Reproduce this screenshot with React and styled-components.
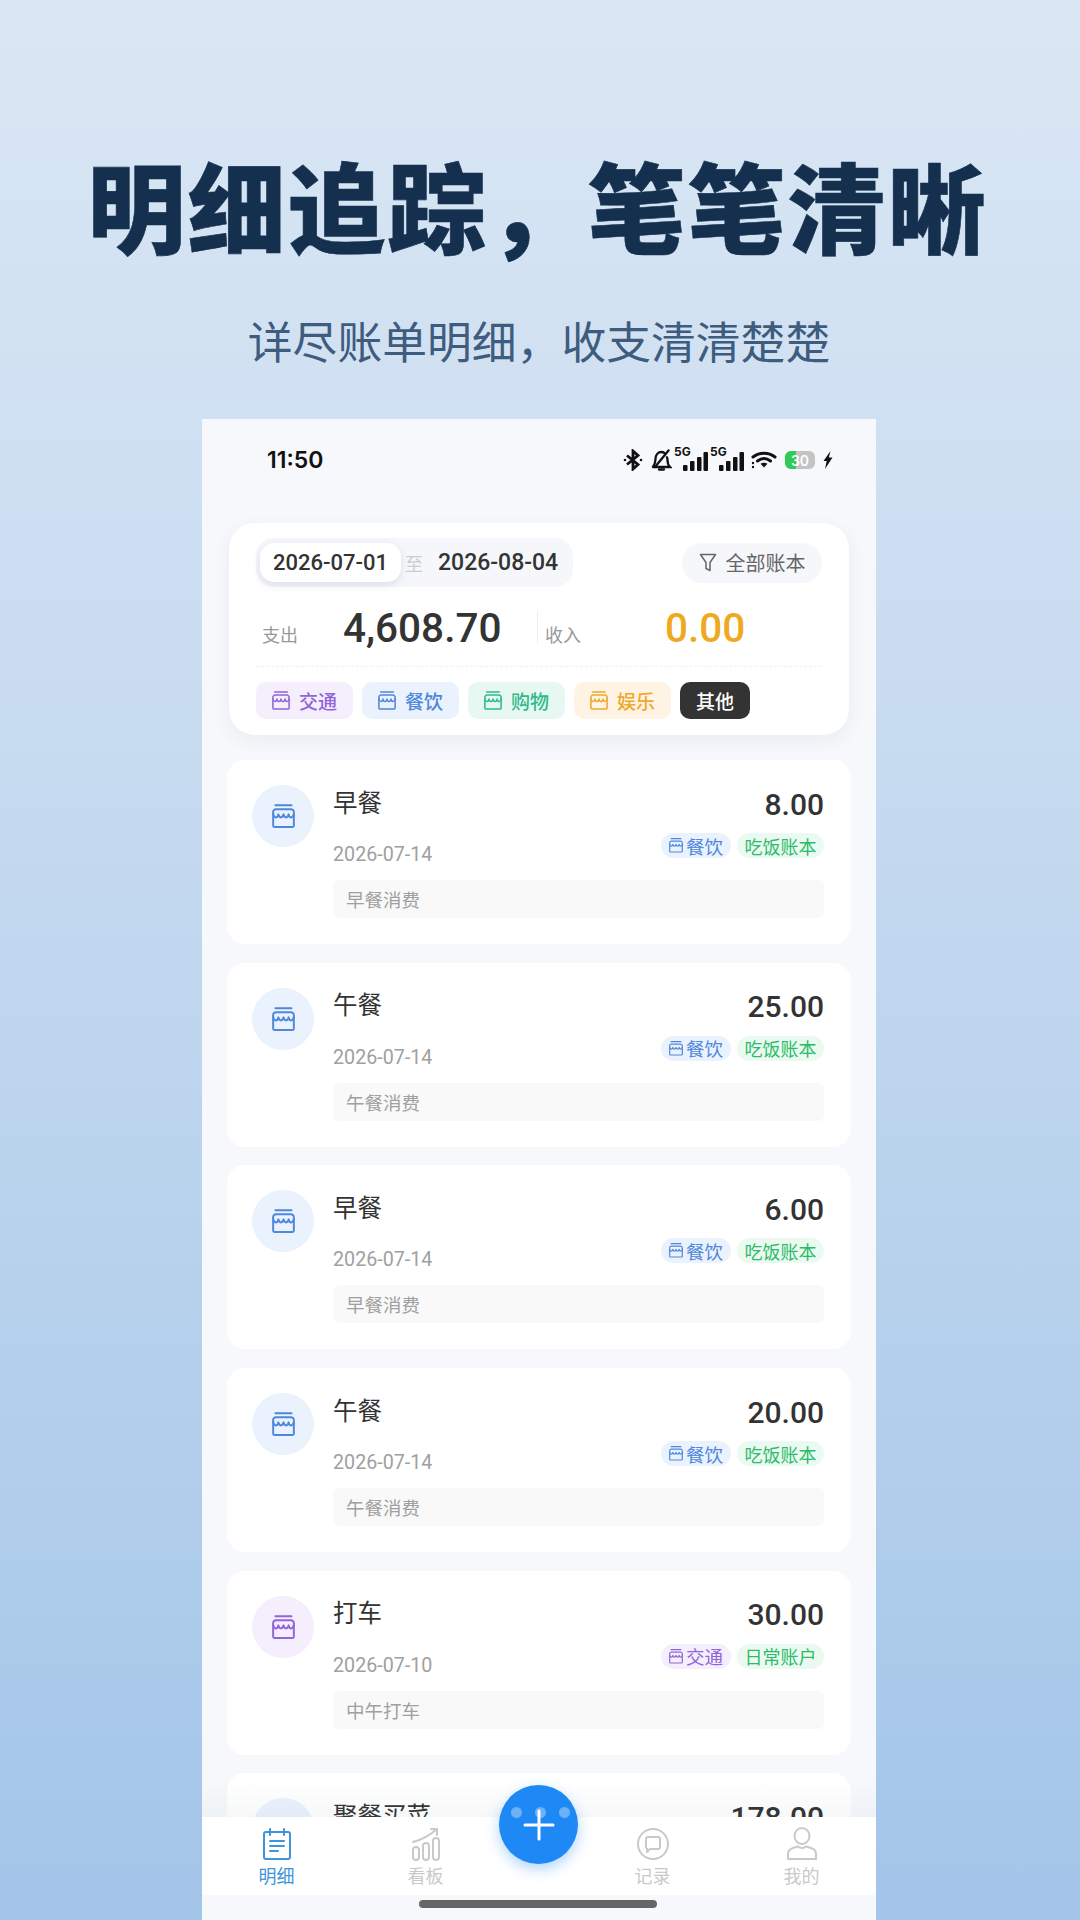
import styled, { createGlobalStyle } from "styled-components";

const CJK = `"Noto Sans CJK SC", sans-serif`;
const UI = `Roboto, "Noto Sans CJK SC", sans-serif`;

const TONES = {
  transport: { color: "#9164d8", bg: "#f4eefd" },
  food: { color: "#4f87dc", bg: "#eaf2fe" },
  shop: { color: "#2fb98b", bg: "#e7f8f2" },
  fun: { color: "#eea92c", bg: "#fff4e4" },
};

const GlobalStyle = createGlobalStyle`
  html, body {
    margin: 0;
    padding: 0;
  }
  body {
    font-family: ${CJK};
  }
`;

const Page = styled.div`
  width: 1080px;
  height: 1920px;
  overflow: hidden;
  display: flex;
  flex-direction: column;
  background: linear-gradient(180deg, #dae7f4 0%, #c9dcf1 35%, #b5d0ec 70%, #a3c5e9 100%);
`;

const Hero = styled.header`
  height: 419px;
  flex-shrink: 0;
  display: flex;
  flex-direction: column;
  align-items: center;
`;

const Headline = styled.h1`
  margin: 133px 5px 0 0;
  font-family: ${CJK};
  font-size: 98px;
  line-height: 140px;
  font-weight: 900;
  letter-spacing: 2px;
  color: #14304e;
  -webkit-text-stroke: 0.6px #14304e;
  white-space: nowrap;
`;

const Tagline = styled.p`
  margin: 37px 2px 0 0;
  font-family: ${CJK};
  font-size: 44.8px;
  line-height: 60px;
  font-weight: 400;
  color: #3e5c7e;
  white-space: nowrap;
`;

const Phone = styled.main`
  position: relative;
  width: 674px;
  margin-left: 202px;
  height: 1501px;
  overflow: hidden;
  display: flex;
  flex-direction: column;
  background: #f6f8fb;
`;

const StatusBar = styled.div`
  height: 82px;
  flex-shrink: 0;
  padding: 0 43px 0 65px;
  display: flex;
  align-items: center;
  justify-content: space-between;
`;

const Clock = styled.span`
  font-family: Inter, sans-serif;
  font-size: 23px;
  font-weight: 600;
  color: #111;
`;

const StatusIcons = styled.div`
  display: flex;
  align-items: center;
  gap: 8px;
`;

const Cell = styled.div`
  position: relative;
  width: 33px;
  height: 22px;
  margin-left: ${(p) => p.$shift || 0}px;
`;

const CellLabel = styled.span`
  position: absolute;
  left: 0;
  top: -3px;
  font-family: Inter, sans-serif;
  font-size: 12px;
  line-height: 12px;
  font-weight: 700;
  color: #111;
`;

const Battery = styled.div`
  position: relative;
  width: 30px;
  height: 18px;
  border-radius: 6px;
  overflow: hidden;
  background: #c4c4c4;
  display: flex;
  align-items: center;
  justify-content: center;
  font-family: Inter, sans-serif;
  font-size: 14px;
  font-weight: 600;
  color: #fff;

  &::before {
    content: "";
    position: absolute;
    left: 0;
    top: 0;
    bottom: 0;
    width: 11px;
    background: #2ecb55;
  }

  span {
    position: relative;
  }
`;

const Summary = styled.section`
  margin: 22px 27px 25px 27px;
  flex-shrink: 0;
  height: 212px;
  box-sizing: border-box;
  padding: 15px 27px 16px;
  border-radius: 26px;
  background: #fff;
  box-shadow: 0 6px 18px rgba(70, 90, 120, 0.07);
  display: flex;
  flex-direction: column;
`;

const FilterRow = styled.div`
  display: flex;
  align-items: center;
  justify-content: space-between;
`;

const RangePill = styled.div`
  height: 49px;
  width: 317px;
  box-sizing: border-box;
  padding-left: 4px;
  border-radius: 18px;
  background: #f5f7fb;
  display: flex;
  align-items: center;
`;

const RangeDate = styled.span`
  height: 39px;
  flex-shrink: 0;
  padding: 0 ${(p) => (p.$active ? 13 : 15)}px;
  border-radius: 14px;
  display: flex;
  align-items: center;
  white-space: nowrap;
  font-family: ${UI};
  font-size: ${(p) => (p.$active ? 22 : 23)}px;
  font-weight: 500;
  color: #333;
  background: ${(p) => (p.$active ? "#fff" : "transparent")};
  box-shadow: ${(p) => (p.$active ? "0 3px 8px rgba(60, 80, 110, 0.14)" : "none")};
`;

const RangeSep = styled.span`
  margin-left: 4px;
  font-size: 18px;
  color: #ccc;
`;

const BookFilter = styled.div`
  height: 40px;
  width: 140px;
  box-sizing: border-box;
  border-radius: 20px;
  background: #f5f7fb;
  display: flex;
  align-items: center;
  justify-content: center;
  gap: 9px;
  font-size: 20px;
  color: #666;
`;

const Stats = styled.div`
  flex: 1;
  display: flex;
  align-items: center;
  padding: 2px 0 0 6px;
  border-bottom: 1px dashed #f0f0f0;
`;

const Stat = styled.div`
  display: flex;
  align-items: baseline;
  width: ${(p) => p.$width}px;
`;

const StatLabel = styled.span`
  width: ${(p) => p.$width}px;
  flex-shrink: 0;
  font-size: 18px;
  color: #999;
`;

const StatValue = styled.span`
  font-family: ${UI};
  font-size: 40.5px;
  font-weight: 500;
  color: ${(p) => p.$color};
`;

const StatDivider = styled.span`
  width: 1px;
  height: 33px;
  margin-right: 7px;
  background: #eee;
`;

const Chips = styled.div`
  margin-top: 15px;
  display: flex;
  gap: 9px;
`;

const Chip = styled.div`
  height: 37px;
  box-sizing: border-box;
  padding: 0 16px;
  border-radius: 10px;
  display: flex;
  align-items: center;
  gap: 9px;
  font-size: 19px;
  font-weight: 500;
  color: ${(p) => (p.$tone ? TONES[p.$tone].color : "#fff")};
  background: ${(p) => (p.$tone ? TONES[p.$tone].bg : "#333")};
`;

const List = styled.div`
  margin: 0 25px 0 25px;
  display: flex;
  flex-direction: column;
  gap: 18.7px;
`;

const EntryCard = styled.article`
  flex-shrink: 0;
  padding: 25px 27px 26px 25px;
  border-radius: 18px;
  background: #fff;
  display: flex;
  gap: 19px;
`;

const EntryIcon = styled.div`
  width: 62px;
  height: 62px;
  flex-shrink: 0;
  border-radius: 50%;
  background: ${(p) => TONES[p.$tone].bg};
  color: ${(p) => TONES[p.$tone].color};
  display: flex;
  align-items: center;
  justify-content: center;
`;

const EntryBody = styled.div`
  flex: 1;
  min-width: 0;
`;

const TopLine = styled.div`
  height: 38px;
  display: flex;
  align-items: center;
  justify-content: space-between;
`;

const EntryTitle = styled.span`
  padding-bottom: 5px;
  font-size: 24.5px;
  line-height: 38px;
  color: #333;
`;

const Amount = styled.span`
  font-family: ${UI};
  font-size: 30px;
  font-weight: 500;
  color: #333;
`;

const MetaLine = styled.div`
  height: 27px;
  margin-top: 12px;
  display: flex;
  align-items: flex-start;
  justify-content: space-between;
`;

const EntryDate = styled.span`
  font-family: ${UI};
  font-size: 19.7px;
  line-height: 27px;
  padding-top: 6px;
  color: #a0a0a0;
`;

const Tags = styled.div`
  margin-top: -2px;
  display: flex;
  gap: 6px;
`;

const TypeTag = styled.span`
  height: 25px;
  padding: 0 8px;
  border-radius: 13px;
  display: flex;
  align-items: center;
  gap: 3px;
  font-size: 18.5px;
  color: ${(p) => TONES[p.$tone].color};
  background: ${(p) => TONES[p.$tone].bg};
`;

const BookTag = styled.span`
  height: 25px;
  padding: 0 7.5px;
  border-radius: 13px;
  display: flex;
  align-items: center;
  font-size: 18px;
  color: #2cba6a;
  background: #ebfaf0;
`;

const Note = styled.div`
  height: 38px;
  margin-top: 18px;
  padding: 0 13px;
  border-radius: 6px;
  display: flex;
  align-items: center;
  font-size: 18.5px;
  color: #a0a0a0;
  background: #f9f9f9;
`;

const TabBar = styled.nav`
  position: absolute;
  left: 0;
  right: 0;
  bottom: 25px;
  height: 78px;
  background: #fff;
  display: grid;
  grid-template-columns: 149px 149px 1fr 149px 149px;

  &::before {
    content: "";
    position: absolute;
    left: 0;
    right: 0;
    top: -34px;
    height: 34px;
    background: linear-gradient(180deg, rgba(90, 110, 130, 0), rgba(90, 110, 130, 0.05));
  }

  &::after {
    content: "";
    position: absolute;
    left: 0;
    right: 0;
    bottom: -25px;
    height: 25px;
    background: #f6f8fb;
  }
`;

const Tab = styled.div`
  padding-top: 10px;
  display: flex;
  flex-direction: column;
  align-items: center;
  gap: 2px;
  font-size: 18px;
  line-height: 24px;
  color: ${(p) => (p.$active ? "#3f94da" : "#c9c9c9")};
`;

const TabIcon = styled.svg`
  width: 34px;
  height: 34px;
  display: block;
`;

const Fab = styled.div`
  position: absolute;
  left: 50%;
  top: -32px;
  width: 79px;
  height: 79px;
  margin-left: -40px;
  border-radius: 50%;
  background: #1e88f5;
  box-shadow: 0 5px 14px rgba(30, 136, 245, 0.35);
  display: flex;
  align-items: center;
  justify-content: center;
  z-index: 2;
`;

const FabDots = styled.div`
  position: absolute;
  left: 12px;
  right: 8px;
  top: 22px;
  display: flex;
  justify-content: space-between;

  i {
    width: 11px;
    height: 11px;
    border-radius: 50%;
    background: rgba(255, 255, 255, 0.35);
  }
`;

const HomeIndicator = styled.div`
  position: absolute;
  left: 217px;
  bottom: 12px;
  width: 238px;
  height: 8px;
  border-radius: 4px;
  background: #666;
`;

const StoreIcon = ({ size = 24 }) => (
  <svg width={size} height={size * 1.06} viewBox="2 1.500 20 21.200" fill="none" stroke="currentColor" strokeWidth="1.700" strokeLinecap="round" strokeLinejoin="round">
    <path d="M5 2.500h14" />
    <path d="M3 8.500A2.500 2.500 0 0 1 5.500 6h13A2.500 2.500 0 0 1 21 8.500v12a1 1 0 0 1-1 1H4a1 1 0 0 1-1-1z" />
    <path d="M3 10.500c1 3.600 3.800 3.600 4.500 0 .9 3.600 3.600 3.600 4.500 0 .9 3.600 3.600 3.600 4.500 0 .7 3.600 3.500 3.600 4.500 0" />
  </svg>
);

const FunnelIcon = () => (
  <svg width="18" height="20" viewBox="0 0 18 20" fill="none" stroke="#666" strokeWidth="1.500" strokeLinejoin="round">
    <path d="M1.500 1.500h15L11 9.500v8l-4-2v-6z" />
  </svg>
);

const StatusGlyphs = {
  bluetooth: (
    <svg width="20" height="22" viewBox="0 0 20 22" fill="none" stroke="#111" strokeWidth="2.800">
      <path d="M4 6.500l11 9-5 4.500V2l5 4.500-11 9" />
      <circle cx="2" cy="11" r="1.300" fill="#111" stroke="none" />
      <circle cx="18" cy="11" r="1.300" fill="#111" stroke="none" />
    </svg>
  ),
  bell: (
    <svg width="21" height="22" viewBox="0 0 21 22" fill="none" stroke="#111" strokeWidth="2.300" strokeLinecap="round">
      <path d="M2 18h17c-2-2-2.500-4-2.500-7 0-1-.2-2-.6-2.800M13.500 4.200C12.700 3.500 11.700 3 10.500 3 7 3 4.500 6 4.500 10c0 3-.8 5.500-2.500 8" />
      <path d="M8 20.500h5M17.500 1.500L4 18" />
    </svg>
  ),
  wifi: (
    <svg width="26" height="18" viewBox="0 0 26 18" fill="none" stroke="#111" strokeWidth="3" strokeLinecap="round">
      <path d="M2 6c6.500-5 15.500-5 22 0M6.500 10c4-3 9-3 13 0" />
      <path d="M9.500 12.800c2.300-1.500 4.700-1.500 7 0L13 16.500z" fill="#111" stroke="none" />
      <circle cx="2" cy="12" r="1.200" fill="#111" stroke="none" />
      <circle cx="2" cy="16" r="1.200" fill="#111" stroke="none" />
    </svg>
  ),
  bolt: (
    <svg width="10" height="18" viewBox="0 0 10 18">
      <path d="M7.500 0L.5 10h3.200L2 18l7.500-11.500H5.800z" fill="#111" />
    </svg>
  ),
};

const SignalBars = () => (
  <svg width="25" height="19" viewBox="0 0 25 19" style={{ position: "absolute", left: 9, top: 3 }}>
    <rect x="0" y="13" width="4.500" height="6" rx="1" fill="#111" />
    <rect x="7" y="9" width="4.500" height="10" rx="1" fill="#111" />
    <rect x="14" y="5" width="4.500" height="14" rx="1" fill="#111" />
    <rect x="20.500" y="0" width="4.500" height="19" rx="1" fill="#111" />
  </svg>
);

const chips = [
  { label: "交通", tone: "transport" },
  { label: "餐饮", tone: "food" },
  { label: "购物", tone: "shop" },
  { label: "娱乐", tone: "fun" },
];

const entries = [
  { title: "早餐", amount: "8.00", date: "2026-07-14", note: "早餐消费", type: "餐饮", tone: "food", book: "吃饭账本" },
  { title: "午餐", amount: "25.00", date: "2026-07-14", note: "午餐消费", type: "餐饮", tone: "food", book: "吃饭账本" },
  { title: "早餐", amount: "6.00", date: "2026-07-14", note: "早餐消费", type: "餐饮", tone: "food", book: "吃饭账本" },
  { title: "午餐", amount: "20.00", date: "2026-07-14", note: "午餐消费", type: "餐饮", tone: "food", book: "吃饭账本" },
  { title: "打车", amount: "30.00", date: "2026-07-10", note: "中午打车", type: "交通", tone: "transport", book: "日常账户" },
  // only the top of this one shows above the tab bar
  { title: "聚餐买菜", amount: "178.00", tone: "food" },
];

function Entry({ entry }) {
  return (
    <EntryCard>
      <EntryIcon $tone={entry.tone}>
        <StoreIcon size={23} />
      </EntryIcon>
      <EntryBody>
        <TopLine>
          <EntryTitle>{entry.title}</EntryTitle>
          <Amount>{entry.amount}</Amount>
        </TopLine>
        {entry.note && (
          <>
            <MetaLine>
              <EntryDate>{entry.date}</EntryDate>
              <Tags>
                <TypeTag $tone={entry.tone}>
                  <StoreIcon size={14} />
                  {entry.type}
                </TypeTag>
                <BookTag>{entry.book}</BookTag>
              </Tags>
            </MetaLine>
            <Note>{entry.note}</Note>
          </>
        )}
      </EntryBody>
    </EntryCard>
  );
}

export default function App() {
  return (
    <Page>
      <GlobalStyle />
      <Hero>
        <Headline>明细追踪，笔笔清晰</Headline>
        <Tagline>详尽账单明细，收支清清楚楚</Tagline>
      </Hero>
      <Phone>
        <StatusBar>
          <Clock>11:50</Clock>
          <StatusIcons>
            {StatusGlyphs.bluetooth}
            {StatusGlyphs.bell}
            <Cell $shift={-6}>
              <CellLabel>5G</CellLabel>
              <SignalBars />
            </Cell>
            <Cell $shift={-5}>
              <CellLabel>5G</CellLabel>
              <SignalBars />
            </Cell>
            {StatusGlyphs.wifi}
            <Battery>
              <span>30</span>
            </Battery>
            {StatusGlyphs.bolt}
          </StatusIcons>
        </StatusBar>

        <Summary>
          <FilterRow>
            <RangePill>
              <RangeDate $active>2026-07-01</RangeDate>
              <RangeSep>至</RangeSep>
              <RangeDate>2026-08-04</RangeDate>
            </RangePill>
            <BookFilter>
              <FunnelIcon />
              全部账本
            </BookFilter>
          </FilterRow>
          <Stats>
            <Stat $width={275}>
              <StatLabel $width={81}>支出</StatLabel>
              <StatValue $color="#333">4,608.70</StatValue>
            </Stat>
            <StatDivider />
            <Stat>
              <StatLabel $width={120}>收入</StatLabel>
              <StatValue $color="#eea91f">0.00</StatValue>
            </Stat>
          </Stats>
          <Chips>
            {chips.map((chip) => (
              <Chip key={chip.label} $tone={chip.tone}>
                <StoreIcon size={18} />
                {chip.label}
              </Chip>
            ))}
            <Chip>其他</Chip>
          </Chips>
        </Summary>

        <List>
          {entries.map((entry, i) => (
            <Entry key={i} entry={entry} />
          ))}
        </List>

        <TabBar>
          <Tab $active>
            <TabIcon viewBox="0 0 34 34" fill="none" stroke="#3f94da" strokeWidth="2" strokeLinecap="round">
              <rect x="4" y="5" width="26" height="27" rx="2" />
              <path d="M10 2v6M24 2v6M10 14h14M10 19h14M10 24h8" />
            </TabIcon>
            明细
          </Tab>
          <Tab>
            <TabIcon viewBox="0 0 34 34" fill="none" stroke="#c9c9c9" strokeWidth="2" strokeLinecap="round" strokeLinejoin="round">
              <rect x="4" y="20" width="6" height="13" rx="3" />
              <rect x="14" y="16" width="6" height="17" rx="3" />
              <rect x="24" y="11" width="6" height="22" rx="3" />
              <path d="M4 15C12 13 20 9 28 2M22 2h6v6" />
            </TabIcon>
            看板
          </Tab>
          <span />
          <Tab>
            <TabIcon viewBox="0 0 34 34" fill="none" stroke="#c9c9c9" strokeWidth="2" strokeLinejoin="round">
              <circle cx="17" cy="17" r="15" />
              <path d="M10 12a2 2 0 0 1 2-2h10a2 2 0 0 1 2 2v8a2 2 0 0 1-2 2h-8l-3 3v-3.500a2 2 0 0 1-1-1.500z" />
            </TabIcon>
            记录
          </Tab>
          <Tab>
            <TabIcon viewBox="0 0 34 34" fill="none" stroke="#c9c9c9" strokeWidth="2" strokeLinejoin="round">
              <ellipse cx="17" cy="9" rx="7.500" ry="8" />
              <path d="M3 32v-5c0-3 2-5 5-6l5-1.500c2 2 6 2 8 0l5 1.500c3 1 5 3 5 6v5z" />
            </TabIcon>
            我的
          </Tab>
          <Fab>
            <FabDots>
              <i />
              <i />
              <i />
            </FabDots>
            <svg width="32" height="32" viewBox="0 0 32 32" stroke="#fff" strokeWidth="3" strokeLinecap="round">
              <path d="M16 2v28M2 16h28" />
            </svg>
          </Fab>
        </TabBar>
        <HomeIndicator />
      </Phone>
    </Page>
  );
}
